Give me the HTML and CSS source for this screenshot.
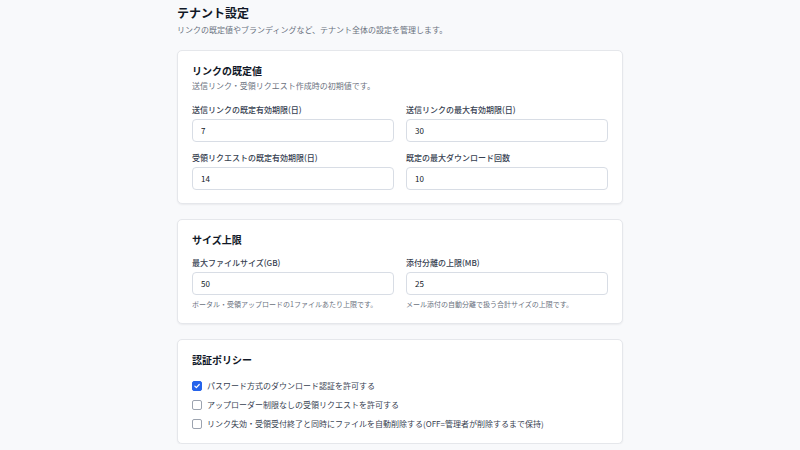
FILE: index.html
```html
<!DOCTYPE html>
<html lang="ja">
<head>
<meta charset="utf-8">
<link rel="stylesheet" href="styles.css">
</head>
<body>
<main class="page">
  <header class="page-head">
    <h1 class="page-title">テナント設定</h1>
    <p class="page-sub">リンクの既定値やブランディングなど、テナント全体の設定を管理します。</p>
  </header>

  <section class="card">
    <h2 class="card-title">リンクの既定値</h2>
    <p class="card-desc">送信リンク・受領リクエスト作成時の初期値です。</p>
    <div class="grid">
      <label class="field">
        <span class="label">送信リンクの既定有効期限(日)</span>
        <input class="input" type="text" value="7">
      </label>
      <label class="field">
        <span class="label">送信リンクの最大有効期限(日)</span>
        <input class="input" type="text" value="30">
      </label>
      <label class="field">
        <span class="label">受領リクエストの既定有効期限(日)</span>
        <input class="input" type="text" value="14">
      </label>
      <label class="field">
        <span class="label">既定の最大ダウンロード回数</span>
        <input class="input" type="text" value="10">
      </label>
    </div>
  </section>

  <section class="card">
    <h2 class="card-title">サイズ上限</h2>
    <div class="grid grid-top">
      <label class="field">
        <span class="label">最大ファイルサイズ(GB)</span>
        <input class="input" type="text" value="50">
        <span class="help">ポータル・受領アップロードの1ファイルあたり上限です。</span>
      </label>
      <label class="field">
        <span class="label">添付分離の上限(MB)</span>
        <input class="input" type="text" value="25">
        <span class="help">メール添付の自動分離で扱う合計サイズの上限です。</span>
      </label>
    </div>
  </section>

  <section class="card">
    <h2 class="card-title">認証ポリシー</h2>
    <div class="checks">
      <label class="check"><span class="box on"><svg viewBox="0 0 10 10" width="10" height="10"><path d="M2.3 5.2 L4.2 7.1 L7.8 3.1" fill="none" stroke="#fff" stroke-width="1.5" stroke-linecap="round" stroke-linejoin="round"/></svg></span>パスワード方式のダウンロード認証を許可する</label>
      <label class="check"><span class="box"></span>アップローダー制限なしの受領リクエストを許可する</label>
      <label class="check"><span class="box"></span>リンク失効・受領受付終了と同時にファイルを自動削除する(OFF=管理者が削除するまで保持)</label>
    </div>
  </section>
</main>
</body>
</html>
```

FILE: styles.css
```css
* { box-sizing: border-box; }
html, body { margin: 0; padding: 0; }
body {
  background: #f8f9fb;
  font-family: "Noto Sans CJK JP", "Noto Sans", sans-serif;
  color: #111827;
}
.page {
  width: 446px;
  margin: 0 auto;
  padding-top: 5px;
  display: flex;
  flex-direction: column;
  gap: 15px;
}
.page-head { margin-bottom: -1px; }
.page-title {
  margin: 0;
  font-size: 12px;
  line-height: 16px;
  font-weight: 700;
  color: #111827;
}
.page-sub {
  margin: 3px 0 0;
  font-size: 8px;
  line-height: 12px;
  color: #6b7280;
}
.card {
  background: #fff;
  border: 1px solid #e5e7eb;
  border-radius: 5px;
  box-shadow: 0 1px 2px rgba(15, 23, 42, 0.06);
  padding: 13px 14px 13px;
}
.card-title {
  margin: 0;
  font-size: 10px;
  line-height: 14px;
  font-weight: 700;
  color: #111827;
}
.card-desc {
  margin: 2px 0 0;
  font-size: 8px;
  line-height: 12px;
  color: #6b7280;
}
.grid {
  margin-top: 12px;
  display: grid;
  grid-template-columns: 1fr 1fr;
  column-gap: 12px;
  row-gap: 10px;
}
.grid-top { margin-top: 10px; }
.field { display: flex; flex-direction: column; }
.label {
  font-size: 8px;
  line-height: 12px;
  font-weight: 500;
  color: #374151;
  margin-bottom: 3px;
}
.input {
  height: 23px;
  border: 1px solid #d8dde5;
  border-radius: 4px;
  padding: 0 8px;
  font-family: inherit;
  font-size: 8px;
  color: #111827;
  background: #fff;
  outline: none;
  width: 100%;
}
.help {
  margin-top: 3px;
  font-size: 7px;
  line-height: 12px;
  color: #6b7280;
}
.checks {
  margin-top: 13px;
  display: flex;
  flex-direction: column;
  gap: 7px;
}
.check {
  display: flex;
  align-items: center;
  gap: 5px;
  font-size: 8px;
  line-height: 12px;
  color: #374151;
}
.box {
  width: 10px;
  height: 10px;
  border: 1px solid #9ca3af;
  border-radius: 2px;
  background: #fff;
  display: flex;
  align-items: center;
  justify-content: center;
  flex: none;
}
.box.on {
  background: #2563eb;
  border-color: #2563eb;
}
.box svg { display: block; }
```
